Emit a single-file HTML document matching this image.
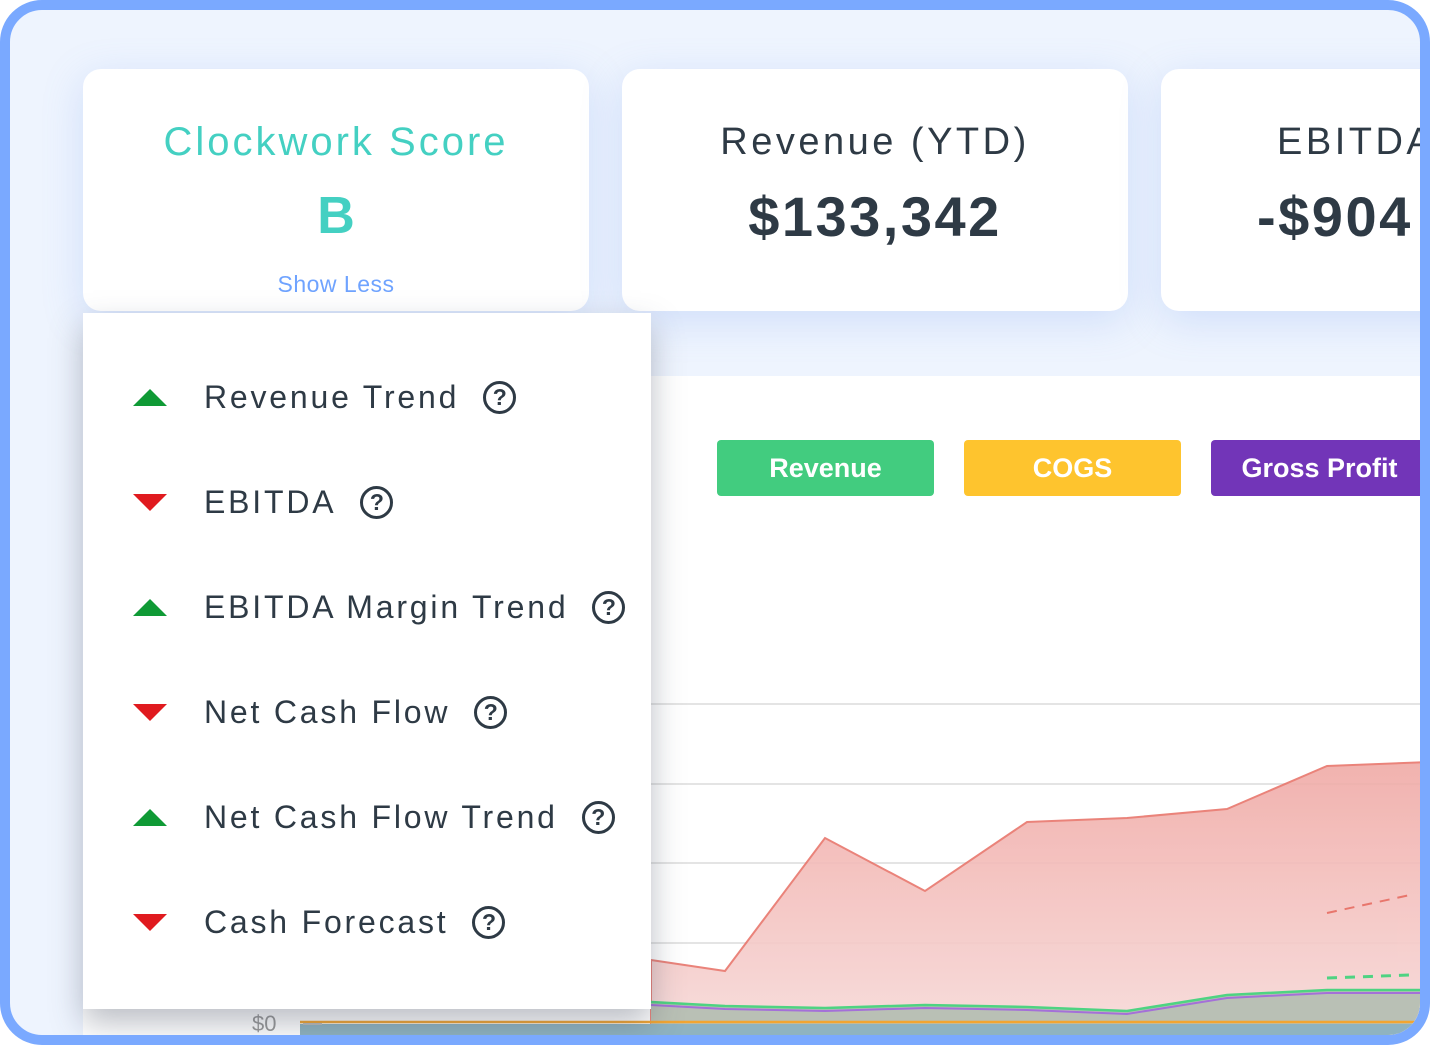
<!DOCTYPE html>
<html><head><style>
*{margin:0;padding:0;box-sizing:border-box}
body{width:1430px;height:1045px;background:#fff;overflow:hidden;font-family:"Liberation Sans",sans-serif;position:relative}
.frame{position:absolute;left:0;top:0;width:1430px;height:1045px;border:10px solid #7aa9ff;border-radius:42px;background:#eef4fe;overflow:hidden}
.in{position:absolute;left:-10px;top:-10px;width:1430px;height:1045px}
.card{position:absolute;top:69px;width:506px;height:242px;background:#fff;border-radius:18px;box-shadow:0 10px 40px rgba(120,160,240,.25);text-align:center}
.t{font-size:38px;letter-spacing:3.5px;color:#2e3a45;position:absolute;left:0;right:0;top:52px}
.v{font-size:56px;font-weight:bold;color:#2e3a45;position:absolute;left:0;right:0;top:115px;letter-spacing:2.5px}
.panel{position:absolute;left:83px;top:376px;width:1400px;height:700px;background:#fff}
.dd{position:absolute;left:83px;top:313px;width:568px;height:696px;background:#fff;box-shadow:0 14px 30px rgba(60,70,90,.35)}
.it{position:absolute;left:0;font-size:32px;letter-spacing:2.8px;color:#2e3a45;display:flex;align-items:center}
.up{width:0;height:0;border-left:17px solid transparent;border-right:17px solid transparent;border-bottom:17px solid #0f9a35;margin-left:50px;margin-right:37px}
.dn{width:0;height:0;border-left:17px solid transparent;border-right:17px solid transparent;border-top:17px solid #e01a1f;margin-left:50px;margin-right:37px}
.q{display:inline-block;width:33px;height:33px;border:3px solid #2e3a45;border-radius:50%;font-size:23px;font-weight:bold;text-align:center;line-height:27px;margin-left:24px;letter-spacing:0}
.btn{position:absolute;top:440px;width:217px;height:56px;border-radius:4px;color:#fff;font-weight:bold;font-size:27px;text-align:center;line-height:56px}
</style></head><body>
<div class="frame"><div class="in">
<div class="card" style="left:83px">
 <div style="position:absolute;left:0;right:0;top:51px;font-size:40px;letter-spacing:3px;color:#44d0c2">Clockwork Score</div>
 <div style="position:absolute;left:0;right:0;top:117px;font-size:52px;font-weight:bold;color:#44d0c2">B</div>
 <div style="position:absolute;left:0;right:0;top:202px;font-size:23px;letter-spacing:.5px;color:#6fa3ff">Show Less</div>
</div>
<div class="card" style="left:622px"><div class="t">Revenue (YTD)</div><div class="v">$133,342</div></div>
<div class="card" style="left:1161px;text-align:left"><div class="t" style="left:116px">EBITDA</div><div class="v" style="left:96px">-$904</div></div>
<div class="panel"></div>
<div class="btn" style="left:717px;background:#42cc7f">Revenue</div>
<div class="btn" style="left:964px;background:#fec42e">COGS</div>
<div class="btn" style="left:1211px;background:#7235b8">Gross Profit</div>
<svg style="position:absolute;left:0;top:0" width="1430" height="1045">
<g stroke="#e4e4e4" stroke-width="2"><line x1="651" y1="704" x2="1430" y2="704"/><line x1="651" y1="784" x2="1430" y2="784"/><line x1="651" y1="863" x2="1430" y2="863"/><line x1="651" y1="943" x2="1430" y2="943"/></g>
<defs><linearGradient id="g" x1="0" y1="0" x2="0" y2="1"><stop offset="0" stop-color="#f0aaa6"/><stop offset="1" stop-color="#f8dcdb"/></linearGradient></defs>
<path d="M651 960 L725 971 L825 838 L925 891 L1027 822 L1127 818 L1227 809 L1327 766 L1430 762 L1430 1045 L651 1045Z" fill="url(#g)" opacity=".9" stroke="#e8766c" stroke-width="2"/>
<path d="M651 1002 L725 1006 L825 1008 L925 1005 L1027 1007 L1127 1011 L1227 995 L1327 990 L1430 990 L1430 1045 L651 1045Z" fill="#b9c0b5"/>
<path d="M651 1002 L725 1006 L825 1008 L925 1005 L1027 1007 L1127 1011 L1227 995 L1327 990 L1430 990" fill="none" stroke="#4ed382" stroke-width="2.5"/>
<path d="M651 1005 L725 1009 L825 1011 L925 1008 L1027 1010 L1127 1014 L1227 998 L1327 993 L1430 993" fill="none" stroke="#a470d8" stroke-width="2"/>
<rect x="300" y="1024" width="1130" height="21" fill="#8fb3c0"/>
<line x1="300" y1="1022" x2="1430" y2="1022" stroke="#f2a531" stroke-width="2.5"/>
<path d="M1327 913 L1410 895" stroke="#e8766c" stroke-width="2" stroke-dasharray="10 8"/>
<path d="M1327 978 L1410 975" stroke="#4ed382" stroke-width="3" stroke-dasharray="10 8"/>
<text x="252" y="1031" font-size="22" fill="#999" font-family="Liberation Sans">$0</text>
<line x1="303" y1="1024" x2="322" y2="1024" stroke="#bbb" stroke-width="2"/>
</svg>
<div class="dd">
 <div class="it" style="top:66px"><span class="up"></span>Revenue Trend<span class="q">?</span></div>
 <div class="it" style="top:171px"><span class="dn"></span>EBITDA<span class="q">?</span></div>
 <div class="it" style="top:276px"><span class="up"></span>EBITDA Margin Trend<span class="q">?</span></div>
 <div class="it" style="top:381px"><span class="dn"></span>Net Cash Flow<span class="q">?</span></div>
 <div class="it" style="top:486px"><span class="up"></span>Net Cash Flow Trend<span class="q">?</span></div>
 <div class="it" style="top:591px"><span class="dn"></span>Cash Forecast<span class="q">?</span></div>
</div>
</div></div>
</body></html>
